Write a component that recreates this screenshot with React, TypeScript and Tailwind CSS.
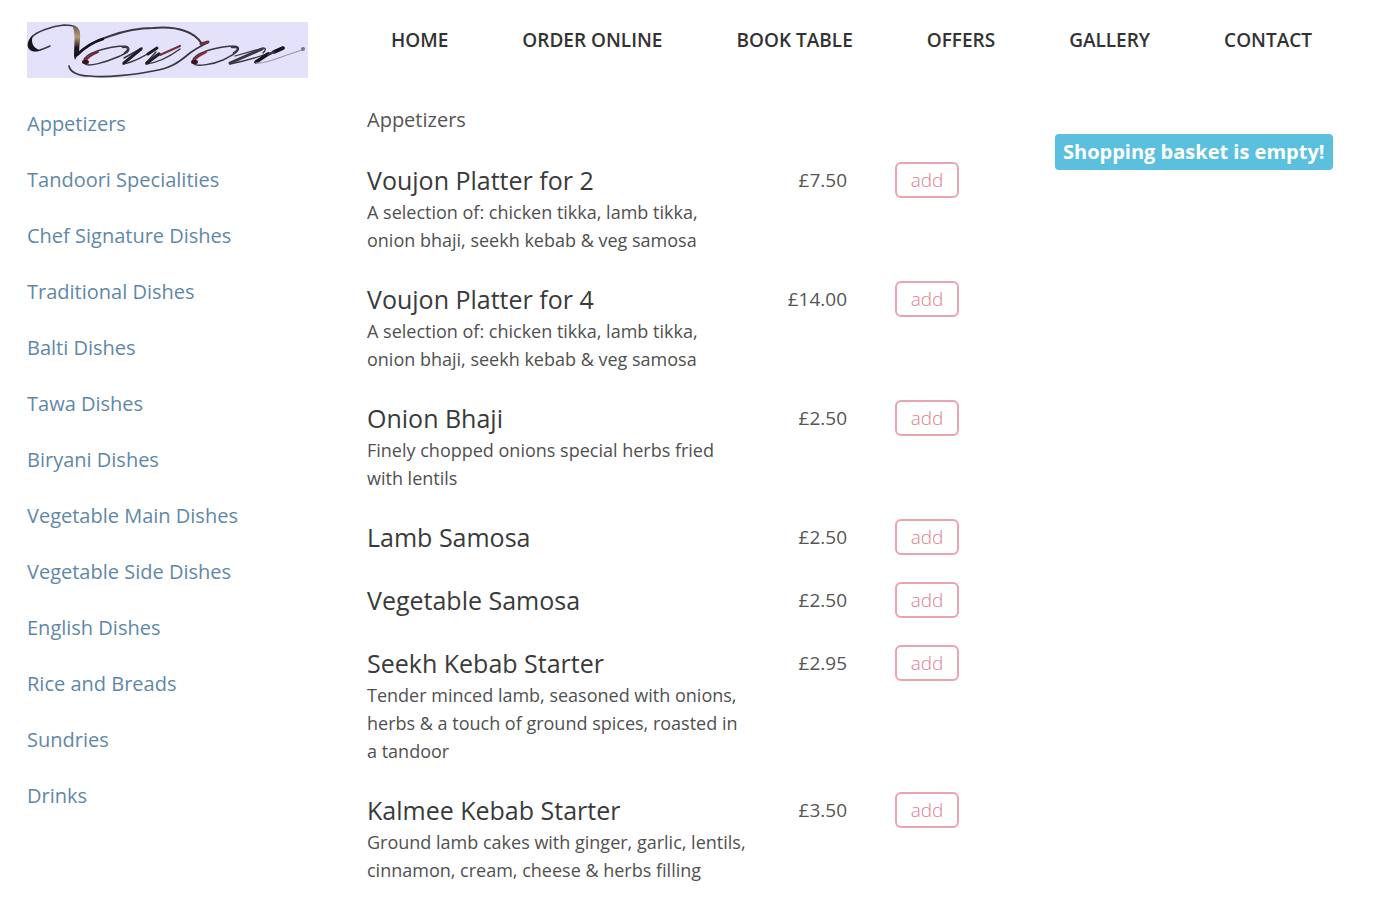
const navLinks = ['HOME', 'ORDER ONLINE', 'BOOK TABLE', 'OFFERS', 'GALLERY', 'CONTACT'];

const categories = [
  'Appetizers', 'Tandoori Specialities', 'Chef Signature Dishes', 'Traditional Dishes',
  'Balti Dishes', 'Tawa Dishes', 'Biryani Dishes', 'Vegetable Main Dishes',
  'Vegetable Side Dishes', 'English Dishes', 'Rice and Breads', 'Sundries', 'Drinks'
];

type Dish = { name: string; price: string; description?: string };

const dishes: Dish[] = [
  { name: 'Voujon Platter for 2', price: '£7.50', description: 'A selection of: chicken tikka, lamb tikka, onion bhaji, seekh kebab & veg samosa' },
  { name: 'Voujon Platter for 4', price: '£14.00', description: 'A selection of: chicken tikka, lamb tikka, onion bhaji, seekh kebab & veg samosa' },
  { name: 'Onion Bhaji', price: '£2.50', description: 'Finely chopped onions special herbs fried with lentils' },
  { name: 'Lamb Samosa', price: '£2.50' },
  { name: 'Vegetable Samosa', price: '£2.50' },
  { name: 'Seekh Kebab Starter', price: '£2.95', description: 'Tender minced lamb, seasoned with onions, herbs & a touch of ground spices, roasted in a tandoor' },
  { name: 'Kalmee Kebab Starter', price: '£3.50', description: 'Ground lamb cakes with ginger, garlic, lentils, cinnamon, cream, cheese & herbs filling' }
];

function Logo() {
  return (
    <svg viewBox="0 0 281 56" className="block w-full bg-[#e4e1fa]" role="img" aria-label="Voujon" fill="none" stroke="#3a3644" strokeLinecap="round" strokeLinejoin="round">
      <defs>
        <linearGradient id="stem" x1="0" y1="0" x2="0" y2="1">
          <stop offset="0" stopColor="#6d5848" />
          <stop offset="0.35" stopColor="#b59a72" />
          <stop offset="0.65" stopColor="#1b1620" />
          <stop offset="1" stopColor="#1b1620" />
        </linearGradient>
      </defs>
      {/* V with its curl */}
      <path d="M23 24C19 26 16 27 13 28M5 15C9 10 25 4 37 3C42 3 45 3 48 5" strokeWidth="1.4" />
      <path d="M6 13C0 18 -1 25 3 28C6 30 11 30 14 28C7 27 3 21 6 13Z" fill="#17131d" stroke="none" />
      <path d="M45 3C52 4 54 9 53 17L52 30L48 38L47 34C47 22 49 11 45 3Z" fill="url(#stem)" stroke="none" />
      {/* loop over and under the word */}
      <path d="M50 33C58 24 70 18 83 14C97 9 112 6 126 6C137 5 150 6 158 9C167 12 172 17 175 22" strokeWidth="1.9" />
      <path d="M180 21C172 25 167 28 163 31C157 36 152 40 146 43C140 46 133 48 126 49C112 52 80 56 63 54C51 54 43 50 42 44" strokeWidth="1.7" />
      <path d="M50 33C58 25 66 20 76 17" stroke="#17131d" strokeWidth="2.6" />
      <path d="M174 22L181 20" stroke="#6b3038" strokeWidth="3" />
      {/* o */}
      <path d="M57 40C56 34 68 29 77 27C87 24 99 23 101 26C102 30 94 34 88 36C79 40 62 45 58 42" strokeWidth="1.5" />
      <path d="M96 25C102 24 103 28 98 31" strokeWidth="2.6" />
      <path d="M58 39C61 35 66 32 71 30" stroke="#7b2030" strokeWidth="2" />
      <path d="M57 40L60 40" stroke="#3c0f1c" strokeWidth="4" />
      {/* u */}
      <path d="M97 36L115 26M96 42C104 41 119 34 130 26" strokeWidth="1.5" />
      <path d="M114 27L97 41M130 26L121 32" stroke="#211d29" strokeWidth="3" />
      <path d="M119 42C130 41 142 35 153 27M129 30L119 41" strokeWidth="1.5" />
      <path d="M132 32L120 41" stroke="#211d29" strokeWidth="3.2" />
      <path d="M153 24L133 33" stroke="#74303e" strokeWidth="2.2" />
      {/* o */}
      <path d="M166 40C165 34 177 29 186 27C197 24 209 23 211 26C212 30 204 34 196 38C187 42 170 45 167 42" strokeWidth="1.5" />
      <path d="M205 25C213 24 212 28 207 31" strokeWidth="2.6" />
      <path d="M167 39C169 35 174 33 179 30" stroke="#8a2935" strokeWidth="2.2" />
      <path d="M166 40L169 40" stroke="#3c0f1c" strokeWidth="4" />
      {/* n with trailing flourish */}
      <path d="M208 34L236 26C240 26 238 29 236 31M203 42C218 39 236 34 256 26" strokeWidth="1.3" />
      <path d="M235 27L203 41" strokeWidth="3" />
      <path d="M256 26L247 30M241 32L229 40" stroke="#17131d" strokeWidth="3.6" />
      <path d="M247 30L241 33" strokeWidth="2" />
      <path d="M229 41C237 42 249 37 260 33L275 28" stroke="#9a97ae" strokeWidth="1.3" />
      <circle cx="276" cy="27" r="2" fill="#77748a" stroke="none" />
    </svg>
  );
}

function DishRow({ dish }: { dish: Dish }) {
  return (
    <li className="flex items-start">
      <div className="flex-1 pr-[10px]">
        <h3 className="text-[25px] leading-9 text-[#3a3a3a]">{dish.name}</h3>
        {dish.description && <p className="text-lg leading-7 text-[#505050]">{dish.description}</p>}
      </div>
      <span className="w-[90px] text-right text-[19px] leading-9 text-[#555]">{dish.price}</span>
      <button className="ml-12 h-9 w-16 rounded-md border-2 border-[#eaa4b0] text-[19px] leading-7 font-light text-[#e0808c] hover:bg-[#fdf0f2]">add</button>
    </li>
  );
}

export default function App() {
  return (
    <div className="min-h-screen bg-white pb-3 font-['Open_Sans','Noto_Sans',sans-serif]">
      <header className="flex items-start pt-[22px] pl-[27px]">
        <a href="#" className="w-[281px] shrink-0"><Logo /></a>
        <nav className="ml-[83px] flex gap-[74px] pt-1">
          {navLinks.map(link => (
            <a key={link} href="#" className="text-[19px] leading-7 font-semibold whitespace-nowrap text-[#333] hover:underline">{link}</a>
          ))}
        </nav>
      </header>

      <div className="flex items-start pl-[27px]">
        <aside className="w-[281px] shrink-0 pt-8">
          <ul className="space-y-7 text-[20px] leading-7">
            {categories.map(category => (
              <li key={category}>
                <a href="#" className="text-[#5f88a8] hover:underline">{category}</a>
              </li>
            ))}
          </ul>
        </aside>

        <main className="ml-[59px] w-[592px] shrink-0 pt-7">
          <h2 className="text-[20px] leading-7 text-[#555]">Appetizers</h2>
          <ul className="mt-7 space-y-[27px]">
            {dishes.map(dish => <DishRow key={dish.name} dish={dish} />)}
          </ul>
        </main>

        <section className="ml-24 pt-14">
          <p className="rounded bg-[#5bc0de] px-2 py-1 text-[20px] leading-7 font-bold whitespace-nowrap text-white">Shopping basket is empty!</p>
        </section>
      </div>
    </div>
  );
}
